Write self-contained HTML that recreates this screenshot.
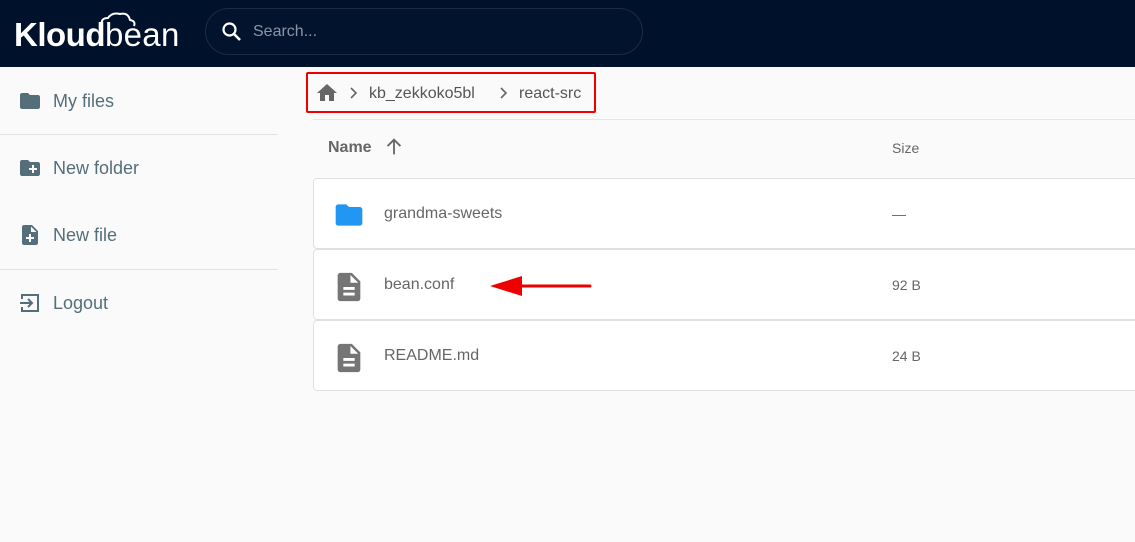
<!DOCTYPE html>
<html><head><meta charset="utf-8"><style>
*{box-sizing:border-box;margin:0;padding:0}
body{width:1135px;height:542px;overflow:hidden;background:#fafafa;font-family:"Liberation Sans",sans-serif;position:relative}
.hdr{position:absolute;left:0;top:0;width:1135px;height:67px;background:#00112b}
.logo{position:absolute;left:14px;top:16px;color:#fff;font-size:33px;letter-spacing:0.3px}
.logo b{font-weight:bold;letter-spacing:-0.5px}
.search{position:absolute;left:205px;top:8px;width:438px;height:47px;border:1px solid #1c2c48;border-radius:24px;background:#02132e}
.search span{position:absolute;left:47px;top:14px;color:#8b94a3;font-size:16px}
.side{position:absolute;left:0;top:67px;width:278px}
.item{position:absolute;left:18px;color:#546e7a;font-size:18px;display:flex;align-items:center}
.item svg{margin-right:11px}
.hr{position:absolute;left:0;width:278px;height:1px;background:#e2e2e2}
.bc{position:absolute;left:306px;top:72px;width:290px;height:41px;border:2px solid #e00;border-radius:2px;font-size:16px;color:#555}
.bc span{position:absolute;top:11px}
.thl{position:absolute;left:313px;top:119px;width:822px;height:1px;background:#e6e6e6}
.th{position:absolute;top:139px;font-size:16px;color:#666}
.row{position:absolute;left:313px;width:830px;height:71px;background:#fff;border:1px solid #e0e0e0;border-radius:4px}
.row .n{position:absolute;left:70px;top:26px;font-size:16px;color:#666}
.row .s{position:absolute;left:578px;top:27px;font-size:14px;color:#666}
.row svg{position:absolute;left:18px;top:20px}
</style></head><body>
<div class="hdr">
<div class="logo"><b>Kloud</b>bean</div>
<svg style="position:absolute;left:98px;top:12px" width="40" height="16" viewBox="0 0 40 16"><path d="M4 14 Q2 6 10 6 Q14 0 22 2 Q30 0 32 8 Q38 9 36 14" fill="none" stroke="#fff" stroke-width="2"/></svg>
<div class="search"><svg style="position:absolute;left:14px;top:11px" width="24" height="24" viewBox="0 0 24 24"><circle cx="9.5" cy="9.5" r="6" fill="none" stroke="#fff" stroke-width="2.2"/><path d="M14 14l6 6" stroke="#fff" stroke-width="2.6"/></svg><span>Search...</span></div>
</div>
<div class="side">
<div class="item" style="top:22px"><svg width="24" height="24" viewBox="0 0 24 24"><path fill="#546e7a" d="M10 4H4c-1.1 0-2 .9-2 2v12c0 1.1.9 2 2 2h16c1.1 0 2-.9 2-2V8c0-1.1-.9-2-2-2h-8l-2-2z"/></svg>My files</div>
<div class="hr" style="top:67px"></div>
<div class="item" style="top:89px"><svg width="24" height="24" viewBox="0 0 24 24"><path fill="#546e7a" d="M20 6h-8l-2-2H4c-1.1 0-2 .9-2 2v12c0 1.1.9 2 2 2h16c1.1 0 2-.9 2-2V8c0-1.1-.9-2-2-2zm-1 8h-3v3h-2v-3h-3v-2h3V9h2v3h3v2z"/></svg>New folder</div>
<div class="item" style="top:156px"><svg width="24" height="24" viewBox="0 0 24 24"><path fill="#546e7a" d="M14 2H6c-1.1 0-2 .9-2 2v16c0 1.1.9 2 2 2h12c1.1 0 2-.9 2-2V8l-6-6zm2 14h-3v3h-2v-3H8v-2h3v-3h2v3h3v2zm-3-7V3.5L18.5 9H13z"/></svg>New file</div>
<div class="hr" style="top:202px"></div>
<div class="item" style="top:224px"><svg width="24" height="24" viewBox="0 0 24 24"><path fill="none" stroke="#546e7a" stroke-width="2" d="M4 8V4h16v16H4v-4M2 12h11M10 8l4 4-4 4"/></svg>Logout</div>
</div>
<div class="bc">
<svg style="position:absolute;left:7px;top:7px" width="24" height="24" viewBox="0 0 24 24"><path fill="#666" d="M10 20v-6h4v6h5v-8h3L12 3 2 12h3v8z"/></svg>
<svg style="position:absolute;left:40px;top:13px" width="10" height="12" viewBox="0 0 10 12"><path d="M3 1l5 5-5 5" fill="none" stroke="#666" stroke-width="1.6"/></svg>
<span style="left:61px">kb_zekkoko5bl</span>
<svg style="position:absolute;left:190px;top:13px" width="10" height="12" viewBox="0 0 10 12"><path d="M3 1l5 5-5 5" fill="none" stroke="#666" stroke-width="1.6"/></svg>
<span style="left:211px">react-src</span>
</div>
<div class="thl"></div>
<div class="th" style="left:328px;font-weight:bold">Name</div>
<svg style="position:absolute;left:383px;top:136px" width="22" height="22" viewBox="0 0 24 24"><path fill="none" stroke="#666" stroke-width="2" d="M12 20V5M5 11l7-7 7 7"/></svg>
<div class="th" style="left:892px;font-size:14px;top:140px">Size</div>
<div class="row" style="top:178px"><svg width="34" height="32" viewBox="0 0 24 24"><path fill="#2196f3" d="M10 4H4c-1.1 0-2 .9-2 2v12c0 1.1.9 2 2 2h16c1.1 0 2-.9 2-2V8c0-1.1-.9-2-2-2h-8l-2-2z"/></svg><div class="n">grandma-sweets</div><div class="s">—</div></div>
<div class="row" style="top:249px"><svg width="34" height="34" viewBox="0 0 24 24"><path fill="#757575" d="M14 2H6c-1.1 0-2 .9-2 2v16c0 1.1.9 2 2 2h12c1.1 0 2-.9 2-2V8l-6-6zm2 16H8v-2h8v2zm0-4H8v-2h8v2zm-3-5V3.5L18.5 9H13z"/></svg><div class="n">bean.conf</div><div class="s">92 B</div></div>
<div class="row" style="top:320px"><svg width="34" height="34" viewBox="0 0 24 24"><path fill="#757575" d="M14 2H6c-1.1 0-2 .9-2 2v16c0 1.1.9 2 2 2h12c1.1 0 2-.9 2-2V8l-6-6zm2 16H8v-2h8v2zm0-4H8v-2h8v2zm-3-5V3.5L18.5 9H13z"/></svg><div class="n">README.md</div><div class="s">24 B</div></div>
<svg style="position:absolute;left:490px;top:275px" width="104" height="22" viewBox="0 0 104 22"><path d="M0 11L32 1V21Z" fill="#e00"/><path d="M30 11H100" stroke="#e00" stroke-width="3" stroke-linecap="round"/></svg>
</body></html>
